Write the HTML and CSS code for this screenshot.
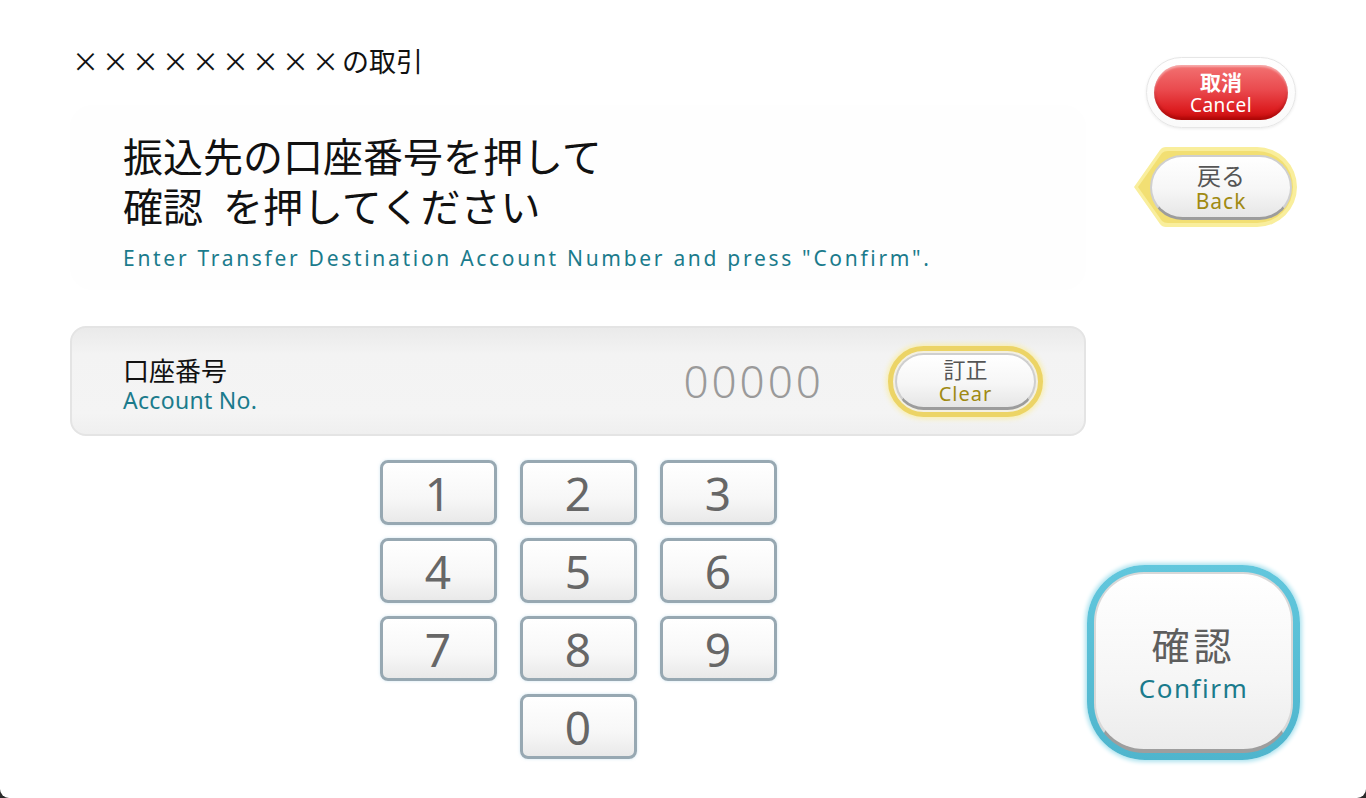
FILE: index.html
```html
<!DOCTYPE html>
<html lang="ja">
<head>
    <meta charset="UTF-8">
    <meta name="viewport" content="width=device-width, initial-scale=1.0">
    <title>振込 口座番号入力</title>
    <link rel="stylesheet" href="styles.css">
</head>
<body>
    <div class="screen">
        <div class="main">
            <div class="title"><span class="marks">×××××××××</span>の取引</div>

            <div class="guide">
                <h1>振込先の口座番号を押して<br>確認&ensp;を押してください</h1>
                <p class="guide-en">Enter Transfer Destination Account Number and press "Confirm".</p>
            </div>

            <div class="account">
                <div class="account-label">
                    <div class="ja">口座番号</div>
                    <div class="en">Account No.</div>
                </div>
                <div class="account-number">00000</div>
                <div class="ring ring-yellow clear-ring">
                    <button class="pill clear-btn">
                        <span class="ja">訂正</span>
                        <span class="en">Clear</span>
                    </button>
                </div>
            </div>

            <div class="keypad">
                <button class="key">1</button>
                <button class="key">2</button>
                <button class="key">3</button>
                <button class="key">4</button>
                <button class="key">5</button>
                <button class="key">6</button>
                <button class="key">7</button>
                <button class="key">8</button>
                <button class="key">9</button>
                <button class="key key-zero">0</button>
            </div>
        </div>

        <div class="side">
            <div class="ring cancel-ring">
                <button class="pill cancel-btn">
                    <span class="ja">取消</span>
                    <span class="en">Cancel</span>
                </button>
            </div>

            <div class="back-wrap">
                <svg class="back-shape" width="168" height="82" viewBox="0 0 168 82">
                    <path d="M4 41 L30 4 Q32 1 36 1 L127 1 A40 40 0 0 1 127 81 L36 81 Q32 81 30 78 Z" fill="#f9ee9c" />
                    <path d="M8 41 L32 7 Q34 5 38 5 L127 5 A36 36 0 0 1 127 77 L38 77 Q34 77 32 75 Z" fill="#f2df73" />
                </svg>
                <button class="pill back-btn">
                    <span class="ja">戻る</span>
                    <span class="en">Back</span>
                </button>
            </div>

            <div class="confirm-ring">
                <button class="confirm-btn">
                    <span class="ja">確認</span>
                    <span class="en">Confirm</span>
                </button>
            </div>
        </div>
    </div>
</body>
</html>
```

FILE: styles.css
```css
html {
    background-color: #2b2b2b;
}
body {
    margin: 0;
    font-family: "Noto Sans", "Noto Sans CJK JP", sans-serif;
    color: #111;
}
button {
    font-family: inherit;
    cursor: pointer;
    padding: 0;
}
.screen {
    display: flex;
    height: 798px;
    box-sizing: border-box;
    padding: 0 66px 0 70px;
    background-color: white;
    border-radius: 0 0 9px 9px;
}
.main {
    width: 1016px;
    flex-shrink: 0;
}
.title {
    padding: 45px 0 0 2px;
    font-family: "Noto Sans CJK JP", sans-serif;
    font-size: 27px;
    line-height: 31px;
}
.marks {
    letter-spacing: 3px;
}
.guide {
    margin-top: 29px;
    padding: 25px 0 18px 53px;
    background-color: #fefefe;
    border-radius: 22px;
}
.guide h1 {
    margin: 0;
    font-family: "Noto Sans CJK JP", sans-serif;
    font-weight: 400;
    font-size: 40px;
    line-height: 50px;
}
.guide-en {
    margin: 14px 0 0;
    font-size: 21px;
    line-height: 28px;
    letter-spacing: 2.7px;
    color: #1b7b8c;
}
.account {
    display: flex;
    align-items: center;
    height: 110px;
    margin-top: 36px;
    box-sizing: border-box;
    padding: 0 41px 0 51px;
    background: linear-gradient(#eaeaea, #f3f3f3 25%, #f4f4f4 80%, #efefef);
    border: 2px solid #e4e4e4;
    border-radius: 16px;
}
.account-label {
    flex: 1;
    padding-top: 6px;
}
.account-label .ja {
    font-family: "Noto Sans CJK JP", sans-serif;
    font-size: 26px;
    line-height: 32px;
}
.account-label .en {
    font-size: 23px;
    line-height: 28px;
    letter-spacing: 0.3px;
    color: #1b7b8c;
}
.account-number {
    margin-right: 64px;
    font-size: 44px;
    font-weight: 300;
    letter-spacing: 3px;
    color: #9a9a9a;
}
.ring {
    box-sizing: border-box;
    border-radius: 40px;
}
.ring-yellow {
    border: 5px solid #ecd466;
    box-shadow: 0 0 5px 2px #f8eeb0;
    padding: 2px;
    background-color: #f3f0e2;
}
.clear-ring {
    width: 155px;
    height: 71px;
}
.pill {
    display: flex;
    flex-direction: column;
    align-items: center;
    justify-content: center;
    width: 100%;
    height: 100%;
    box-sizing: border-box;
    border: 2px solid #cfcfcf;
    border-bottom: 3px solid #9c9c9c;
    border-radius: 36px;
    background: linear-gradient(#ffffff, #f6f6f6 55%, #e6e6e6);
}
.pill .ja {
    font-family: "Noto Sans CJK JP", sans-serif;
    font-size: 22px;
    line-height: 25px;
    color: #555;
}
.pill .en {
    font-size: 20px;
    line-height: 25px;
    letter-spacing: 1px;
    color: #a08a12;
}
.keypad {
    display: grid;
    grid-template-columns: repeat(3, 117px);
    grid-auto-rows: 65px;
    gap: 13px 23px;
    justify-content: center;
    margin-top: 24px;
}
.key {
    box-sizing: border-box;
    border: 3px solid #97a8b2;
    border-radius: 8px;
    background: linear-gradient(#ffffff, #f7f7f7 60%, #e9e9e9);
    box-shadow: 0 0 3px rgba(160, 205, 230, 0.5);
    font-size: 46px;
    line-height: 1;
    color: #676767;
}
.key-zero {
    grid-column: 2;
}
.side {
    display: flex;
    flex-direction: column;
    width: 213px;
    margin-left: 1px;
    padding: 57px 0 38px;
    box-sizing: border-box;
}
.cancel-ring {
    width: 150px;
    height: 71px;
    margin-left: 59px;
    padding: 7px;
    border: 1px solid #e6e6e6;
    background: linear-gradient(#ffffff, #fafafa);
    box-shadow: 0 1px 3px rgba(0, 0, 0, 0.08);
}
.cancel-btn {
    border: none;
    border-radius: 30px;
    background: linear-gradient(#f27272, #ea4a4e 45%, #dd1f22 80%, #c80a0a);
    box-shadow: inset 0 2px 2px rgba(255, 255, 255, 0.4), inset 0 -3px 3px rgba(120, 0, 0, 0.35);
}
.cancel-btn .ja {
    color: white;
    font-weight: 700;
    font-size: 21px;
    line-height: 24px;
}
.cancel-btn .en {
    color: white;
    font-size: 19px;
    line-height: 24px;
    letter-spacing: 0.5px;
}
.back-wrap {
    position: relative;
    display: flex;
    width: 168px;
    height: 82px;
    margin: 18px 0 0 43px;
    padding: 9px 6px 8px 20px;
    box-sizing: border-box;
}
.back-shape {
    position: absolute;
    top: 0;
    left: 0;
}
.back-btn {
    position: relative;
}
.back-btn .ja {
    font-size: 24px;
    line-height: 28px;
}
.back-btn .en {
    font-size: 21px;
}
.confirm-ring {
    width: 213px;
    height: 195px;
    margin-top: auto;
    box-sizing: border-box;
    padding: 7px;
    border-radius: 58px;
    background: linear-gradient(#62c7dd, #4fb5cd);
    box-shadow: 0 0 4px 2px #aee3ef;
}
.confirm-btn {
    display: flex;
    flex-direction: column;
    align-items: center;
    justify-content: center;
    width: 100%;
    height: 100%;
    box-sizing: border-box;
    border: 2px solid #d8d8d8;
    border-bottom: 4px solid #9e9e9e;
    border-radius: 50px;
    background: linear-gradient(#ffffff, #f6f6f6 60%, #ececec);
}
.confirm-btn .ja {
    font-family: "Noto Sans CJK JP", sans-serif;
    font-size: 38px;
    line-height: 48px;
    letter-spacing: 4px;
    color: #5e5e5e;
}
.confirm-btn .en {
    margin-top: 4px;
    font-size: 26px;
    line-height: 32px;
    letter-spacing: 1.5px;
    color: #1b7b8c;
}
```
